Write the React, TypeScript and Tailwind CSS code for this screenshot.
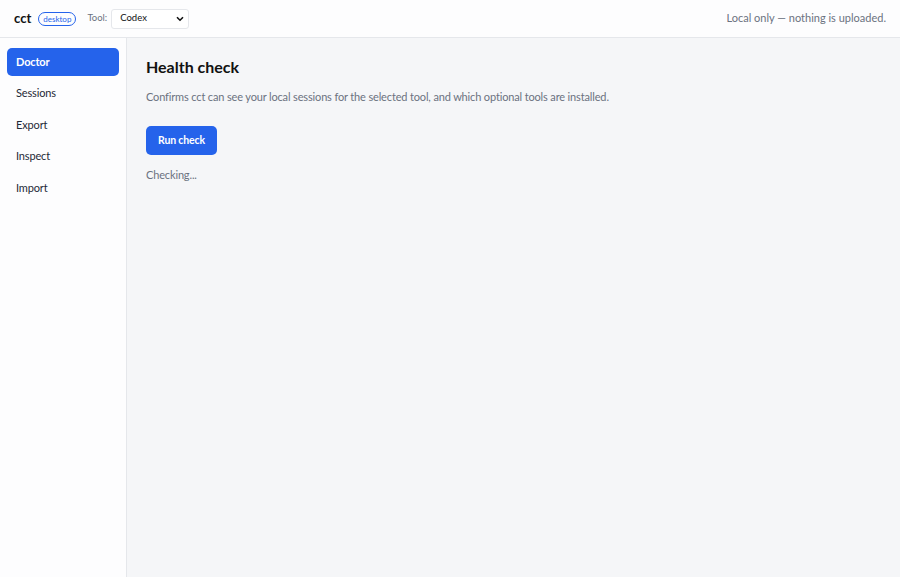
import React from "react";

export default function App() {
  const items = ["Doctor", "Sessions", "Export", "Inspect", "Import"];
  return (
    <div
      className="w-[900px] h-[577px] flex flex-col bg-[#f5f6f8] text-[#111827] overflow-hidden"
      style={{ fontFamily: 'Lato, "Noto Sans", sans-serif' }}
    >
      <header className="h-[38px] shrink-0 flex items-center justify-between px-[14px] bg-[#fdfdfe] border-b border-[#e5e7eb]">
        <div className="flex items-center">
          <span className="text-[13px] font-bold text-[#111]">cct</span>
          <span className="ml-[7px] h-[14px] flex items-center text-[8px] leading-none px-[4px] rounded-full border border-[#2563eb] text-[#2563eb]">
            desktop
          </span>
          <span className="ml-[11px] text-[9.5px] text-[#6b7280]">Tool:</span>
          <div className="ml-[4px] w-[78px] h-[20px] rounded-[3px] border border-[#e5e7eb] bg-white flex items-center justify-between pl-[8px] pr-[4px]">
            <span className="text-[9.5px] text-[#111]">Codex</span>
            <svg width="8" height="6" viewBox="0 0 8 6">
              <path d="M1 1.2 L4 4.2 L7 1.2" stroke="#111" strokeWidth="1.6" fill="none" />
            </svg>
          </div>
        </div>
        <span className="text-[11px] text-[#6b7280]">Local only — nothing is uploaded.</span>
      </header>
      <div className="flex flex-1 min-h-0">
        <aside className="w-[127px] shrink-0 bg-[#fdfdfe] border-r border-[#e5e7eb] px-[7px] pt-[10px] flex flex-col gap-[3.5px]">
          {items.map((it, i) => (
            <div
              key={it}
              className={
                i === 0
                  ? "h-[28px] flex items-center px-[9px] rounded-[5px] bg-[#2563eb] text-white text-[11px] tracking-[-0.15px] font-bold"
                  : "h-[28px] flex items-center px-[9px] text-[11px] tracking-[-0.15px] text-[#1f2937]"
              }
            >
              {it}
            </div>
          ))}
        </aside>
        <main className="flex-1 px-[19px] pt-[18px]">
          <h1 className="text-[16px] font-bold leading-[22px] text-[#111]">Health check</h1>
          <p className="mt-[11px] text-[11px] tracking-[-0.15px] text-[#6b7280] leading-[16px]">
            Confirms cct can see your local sessions for the selected tool, and which optional tools are installed.
          </p>
          <button className="mt-[21px] h-[29px] px-[12px] rounded-[5px] bg-[#2563eb] text-white text-[10.5px] tracking-[-0.15px] font-bold">
            Run check
          </button>
          <div className="mt-[12px] text-[11px] tracking-[-0.15px] text-[#6b7280]">Checking...</div>
        </main>
      </div>
    </div>
  );
}
